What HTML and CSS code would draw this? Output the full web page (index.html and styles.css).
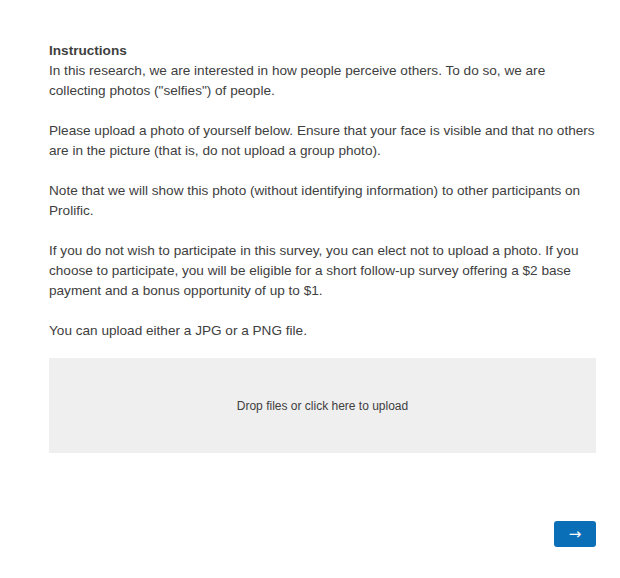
FILE: index.html
```html
<!DOCTYPE html>
<html>
<head>
<meta charset="utf-8">
<link rel="stylesheet" href="styles.css">
</head>
<body>
<main class="page">
  <section class="text">
    <p><strong>Instructions</strong><br>In this research, we are interested in how people perceive others. To do so, we are collecting photos ("selfies") of people.</p>
    <p>Please upload a photo of yourself below. Ensure that your face is visible and that no others are in the picture (that is, do not upload a group photo).</p>
    <p>Note that we will show this photo (without identifying information) to other participants on Prolific.</p>
    <p>If you do not wish to participate in this survey, you can elect not to upload a photo. If you choose to participate, you will be eligible for a short follow-up survey offering a $2 base payment and a bonus opportunity of up to $1.</p>
    <p>You can upload either a JPG or a PNG file.</p>
  </section>
  <div class="drop">Drop files or click here to upload</div>
  <div class="nav"><button class="next">&rarr;</button></div>
</main>
</body>
</html>
```
FILE: styles.css
```css
html, body { margin: 0; padding: 0; background: #fff; }
body { font-family: "Liberation Sans", Arial, sans-serif; color: #404040; }
.page { padding: 41px 24px 0 49px; }
.text { font-size: 13.6px; line-height: 20px; }
.text p { margin: 0 0 20px 0; }
.text p:last-child { margin-bottom: 0; }
.text strong { font-weight: bold; }
.drop {
  margin-top: 17px;
  height: 95px;
  background: #efefef;
  display: flex; align-items: center; justify-content: center;
  font-size: 12px;
  color: #404040;
}
.nav { display: flex; justify-content: flex-end; margin-top: 68px; }
.next {
  width: 42px; height: 26px; border: none; border-radius: 3px;
  background: #0b6fb8; color: #fff; font-size: 15px; padding: 0;
  font-family: "DejaVu Sans", sans-serif; line-height: 26px;
}
```
